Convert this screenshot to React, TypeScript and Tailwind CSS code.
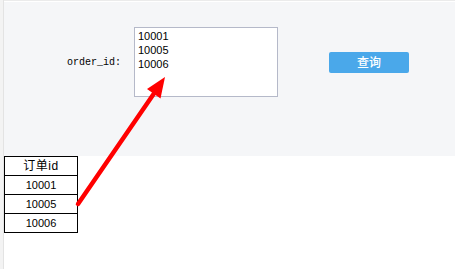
import React from "react";

export default function App() {
  return (
    <div className="relative w-[455px] h-[269px] bg-white flex overflow-hidden">
      <div className="w-[4px] h-full bg-[#f3f3f3] border-r border-[#e3e3e3]" />
      <div className="flex-1 flex flex-col">
        <div className="h-[2px] bg-[#ebebeb] border-b border-white" />
        <div className="h-[154px] bg-[#f5f6f8] pt-[25px]">
          <div className="flex items-center h-[70px]">
            <div
              className="ml-[63px] w-[67px] text-[10px] text-black"
              style={{ fontFamily: '"Liberation Mono", monospace' }}
            >
              order_id:
            </div>
            <div
              className="w-[144px] h-[70px] bg-white border border-[#b5b9c9] pl-[3px] pt-[1px] text-[11px] leading-[14px] text-black"
              style={{ fontFamily: '"Liberation Sans", Arial, sans-serif' }}
            >
              <div>10001</div>
              <div>10005</div>
              <div>10006</div>
            </div>
            <div
              className="ml-[51px] w-[80px] h-[21px] rounded-[2px] bg-[#4aa8ea] text-white text-[12px] font-medium flex items-center justify-center"
              style={{ fontFamily: '"Noto Sans CJK SC", sans-serif' }}
            >
              查询
            </div>
          </div>
        </div>
        <table
          className="border-collapse w-[74px] text-center text-black"
          style={{ fontFamily: '"Liberation Sans", Arial, sans-serif' }}
        >
          <tbody>
            <tr className="h-[19px]">
              <td
                className="border border-black p-0 text-[12px] leading-[17px] tracking-[0.6px]"
                style={{ fontFamily: '"Liberation Sans", "Noto Sans CJK SC", sans-serif' }}
              >
                订单id
              </td>
            </tr>
            {["10001", "10005", "10006"].map((v) => (
              <tr key={v} className="h-[19px]">
                <td className="border border-black p-0 text-[11px] leading-[17px]">{v}</td>
              </tr>
            ))}
          </tbody>
        </table>
      </div>
      <svg className="absolute left-0 top-0" width="455" height="269" viewBox="0 0 455 269">
        <line x1="78" y1="204" x2="155" y2="92" stroke="#ff0000" strokeWidth="4.5" strokeLinecap="round" />
        <polygon points="165,77 147,89 160.5,98.5" fill="#ff0000" />
      </svg>
    </div>
  );
}
